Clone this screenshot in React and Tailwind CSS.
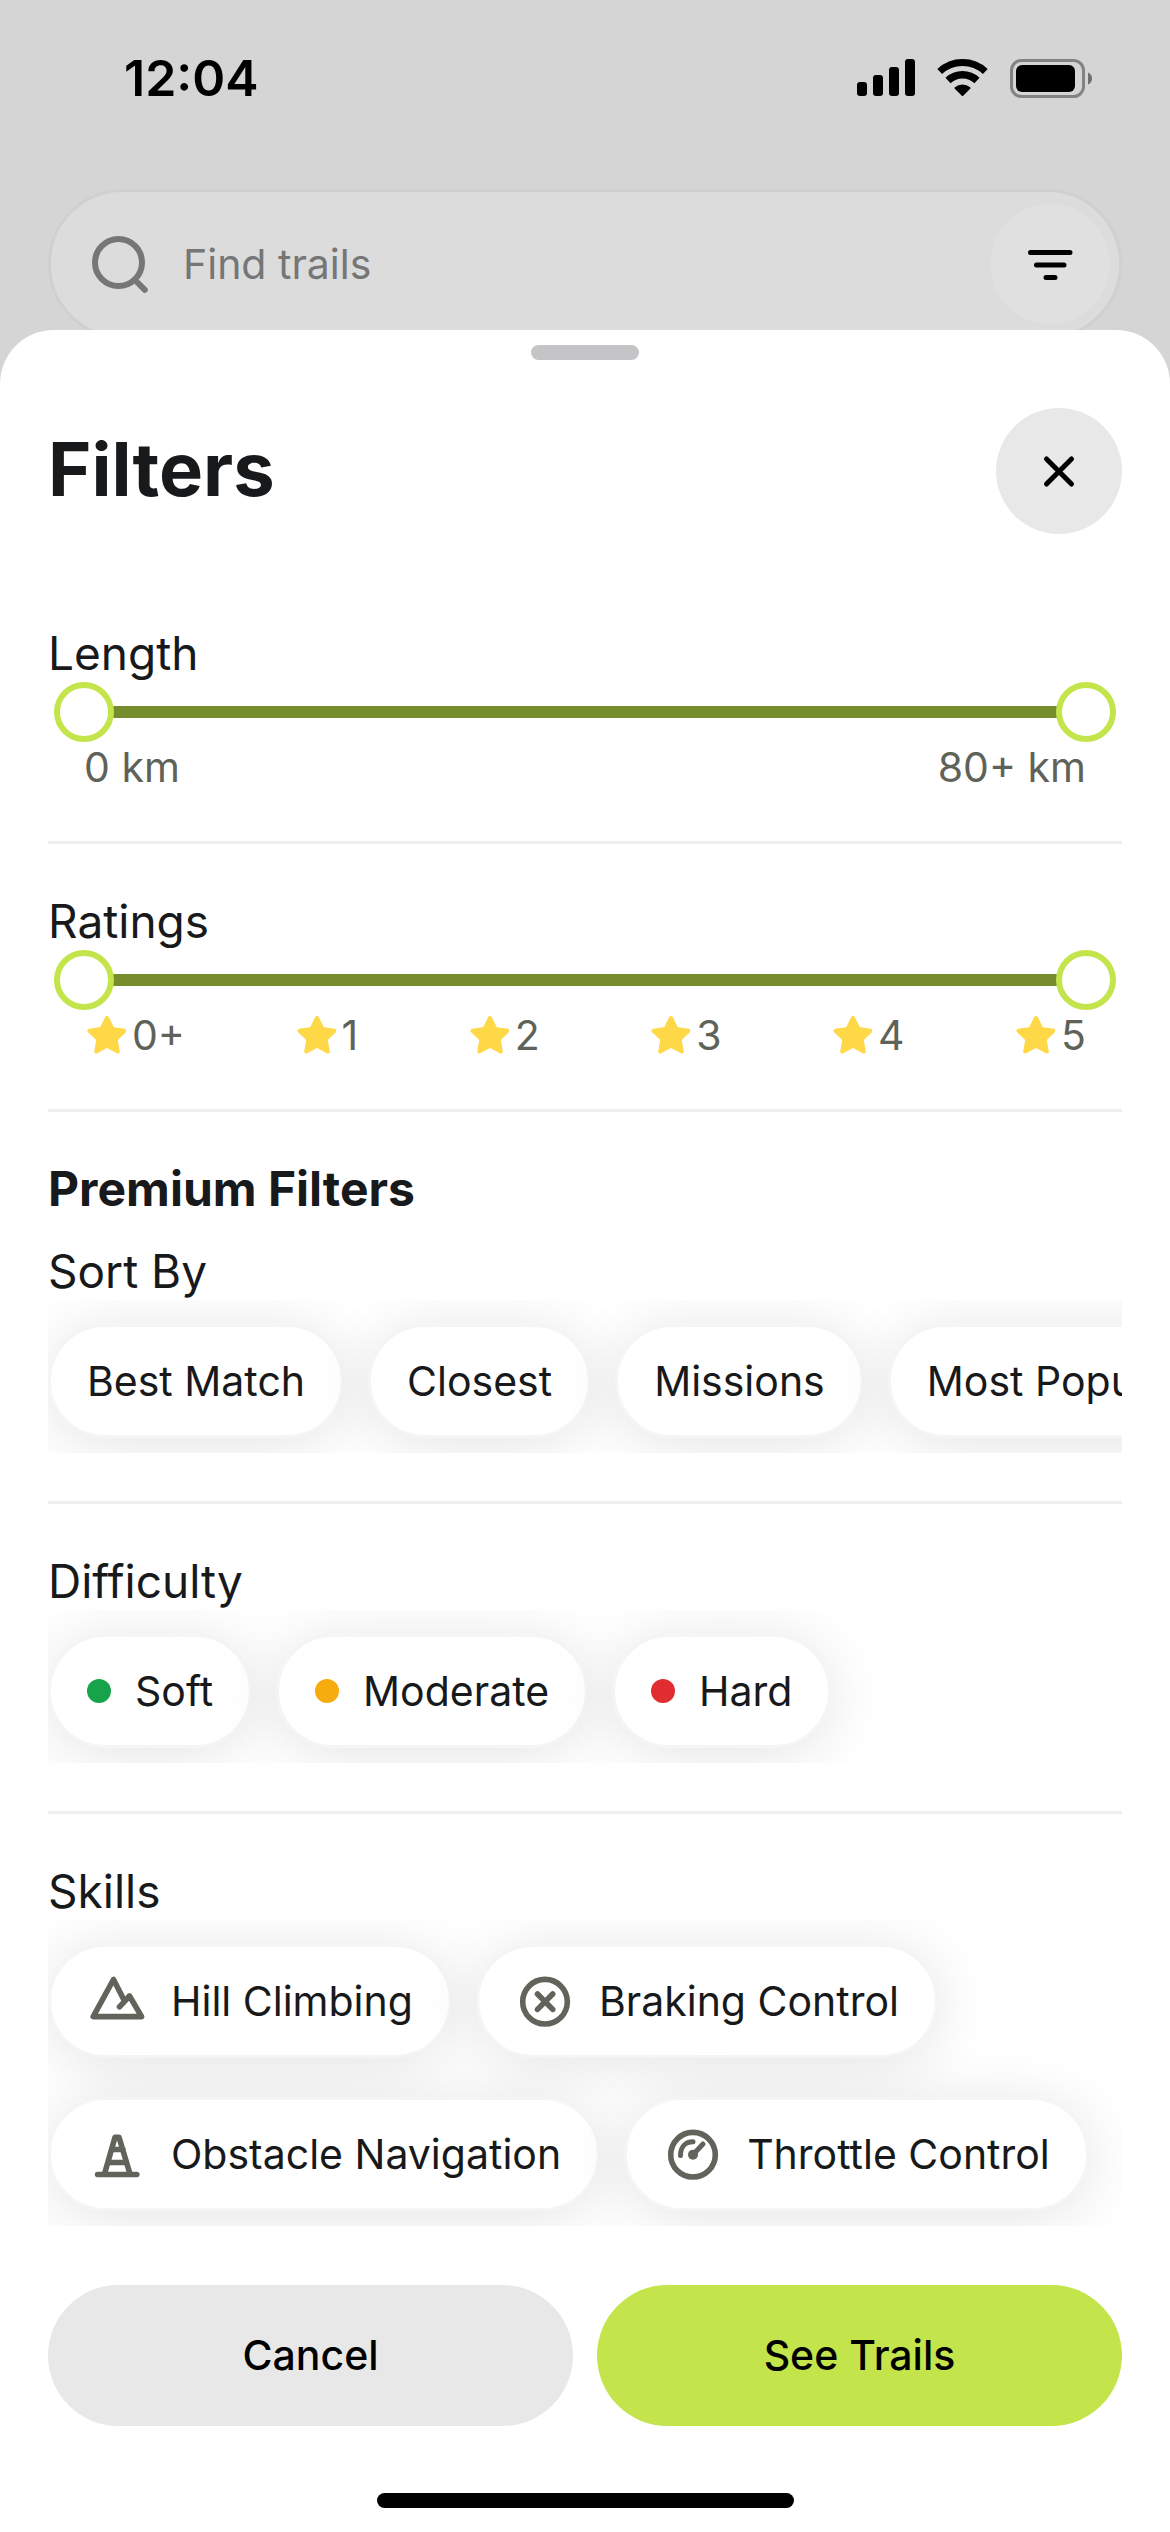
import React, { useState } from "react";

function SignalIcon() {
  return (
    <svg width="58" height="38" viewBox="0 0 58 38" aria-hidden="true">
      <rect x="0" y="23" width="10" height="14" rx="3" />
      <rect x="16" y="16" width="10" height="21" rx="3" />
      <rect x="32" y="8" width="10" height="29" rx="3" />
      <rect x="48" y="0" width="10" height="37" rx="3" />
    </svg>
  );
}

function WifiIcon() {
  return (
    <svg width="51" height="38" viewBox="0 0 51 38" fill="none" stroke="#000" aria-hidden="true">
      <path d="M2.700 12.500a33.500 33.500 0 0 1 45.600 0" strokeWidth="7" />
      <path d="M11 21.400a21.300 21.300 0 0 1 29 0" strokeWidth="7.500" />
      <path d="M18.500 29a10.800 10.800 0 0 1 14 0l-7 7Z" fill="#000" strokeWidth="2" strokeLinejoin="round" />
    </svg>
  );
}

function BatteryIcon() {
  return (
    <svg width="82" height="39" viewBox="0 0 82 39" aria-hidden="true">
      <rect x="1.500" y="1.500" width="72" height="36" rx="10" fill="none" stroke="#838383" strokeWidth="3" />
      <rect x="6" y="6" width="59" height="27" rx="6" />
      <path d="M78 13.500c2.500.8 4 3.200 4 6s-1.500 5.200-4 6Z" fill="#6f6f6f" />
    </svg>
  );
}

function SearchIcon() {
  return (
    <svg width="60" height="60" viewBox="0 0 60 60" fill="none" stroke="#767676" strokeWidth="6" strokeLinecap="round" aria-hidden="true">
      <circle cx="27.500" cy="28.500" r="23.500" />
      <path d="m44.500 46.500 9.300 9.300" />
    </svg>
  );
}

function FilterIcon() {
  return (
    <svg width="48" height="36" viewBox="0 0 48 36" stroke="#000" strokeWidth="5" strokeLinecap="round" aria-hidden="true">
      <path d="M4.500 6.500h39.500M10.500 19h27.500M20 31.500h9" />
    </svg>
  );
}

function CloseIcon() {
  return (
    <svg width="36" height="36" viewBox="0 0 36 36" stroke="#000" strokeWidth="5" strokeLinecap="round" aria-hidden="true">
      <path d="m5.500 6 25 25M30.500 6l-25 25" />
    </svg>
  );
}

function StarIcon() {
  return (
    <svg width="42" height="42" viewBox="0 0 42 42" className="-mt-1" fill="#ffd847" stroke="#ffd847" strokeWidth="4" strokeLinejoin="round" aria-hidden="true">
      <path d="m23 5 5.400 11 12.100 1.800-8.900 8.500 2.200 12.200L23 32.800l-10.800 5.700 2.200-12.200-8.900-8.500L17.600 16Z" />
    </svg>
  );
}

function SkillIcon({ children }) {
  return (
    <svg width="60" height="60" viewBox="0 0 60 60" className="-my-1" fill="none" stroke="#61645b" strokeWidth="5.600" strokeLinecap="round" strokeLinejoin="round" aria-hidden="true">
      {children}
    </svg>
  );
}

const SORTS = ["Best Match", "Closest", "Missions", "Most Popular"];

const DIFFICULTIES = [
  { name: "Soft", dot: "bg-[#17a34a]" },
  { name: "Moderate", dot: "bg-[#f6ac0c]" },
  { name: "Hard", dot: "bg-[#e12d2f]" },
];

const SKILLS = [
  {
    name: "Hill Climbing",
    icon: <path d="m37.500 30-11-21.500L6.200 45.600h48.400L42.500 25 32.500 35.800" />,
  },
  {
    name: "Braking Control",
    icon: (
      <>
        <circle cx="30" cy="30.700" r="22.300" />
        <path d="m22.500 23 15.200 15.400M37.700 23 22.500 38.400" />
      </>
    ),
  },
  {
    name: "Obstacle Navigation",
    icon: <path d="M10.600 50.500h39.200M17.500 50 28 13.200h4L43 50M24.500 25.500h11.500M21 38.500h18.500" />,
  },
  {
    name: "Throttle Control",
    icon: (
      <>
        <circle cx="30" cy="30.700" r="22.300" />
        <circle cx="30" cy="30.700" r="5" fill="#61645b" stroke="none" />
        <path d="M30 30.700 40 20M17.500 31.500c0-8.500 5-13.700 12.500-13.700" strokeWidth="5" />
      </>
    ),
  },
];

function Label({ children }) {
  return <h3 className="text-[46px] leading-[58px] font-normal">{children}</h3>;
}

const THUMB =
  "pointer-events-none absolute inset-0 h-full w-full appearance-none bg-transparent [&::-webkit-slider-thumb]:pointer-events-auto [&::-webkit-slider-thumb]:size-[60px] [&::-webkit-slider-thumb]:appearance-none [&::-webkit-slider-thumb]:rounded-full [&::-webkit-slider-thumb]:border-[6px] [&::-webkit-slider-thumb]:border-solid [&::-webkit-slider-thumb]:border-[#c3e54b] [&::-webkit-slider-thumb]:bg-white";

function RangeSlider({ label, max }) {
  const [low, setLow] = useState(0);
  const [high, setHigh] = useState(max);
  return (
    <div className="relative mx-[6px] flex h-[60px] items-center px-[30px]">
      <div className="h-3 w-full bg-[#778c2c]" />
      <input type="range" min="0" max={max} value={low} aria-label={`Minimum ${label}`} className={THUMB}
        onChange={(e) => setLow(Math.min(Number(e.target.value), high))} />
      <input type="range" min="0" max={max} value={high} aria-label={`Maximum ${label}`} className={THUMB}
        onChange={(e) => setHigh(Math.max(Number(e.target.value), low))} />
    </div>
  );
}

function Pill({ children }) {
  return (
    <button type="button" className="flex shrink-0 items-center gap-6 rounded-full border-[3px] border-[#f5f5f5] bg-white px-9 py-[27px] text-[41px] leading-[54px] whitespace-nowrap shadow-[0_6px_60px_rgba(0,0,0,0.11)]">
      {children}
    </button>
  );
}

function Divider() {
  return <hr className="my-12 border-t-[3px] border-[#eeeeee]" />;
}

export default function App() {
  return (
    <div className="flex min-h-screen flex-col bg-[#d5d5d5] font-[Inter,sans-serif] text-[#18191b]">
      <div className="flex items-center justify-between pt-[47px] pr-[78px] pl-[124px] text-black">
        <span className="text-[50px] leading-[62px] font-semibold">12:04</span>
        <div className="flex items-center gap-[22px]">
          <SignalIcon />
          <WifiIcon />
          <BatteryIcon />
        </div>
      </div>

      <div className="mx-12 mt-20 flex h-[150px] items-center rounded-full border-[3px] border-[#d0d0d2] bg-[#dcdcdc] pr-[9px] pl-10">
        <SearchIcon />
        <input type="search" placeholder="Find trails" aria-label="Find trails"
          className="ml-8 min-w-0 flex-1 bg-transparent text-[41px] leading-[54px] outline-none placeholder:text-[#767676]" />
        <button type="button" aria-label="Open filters" className="flex size-[120px] items-center justify-center rounded-full bg-[#e0e0e0]">
          <FilterIcon />
        </button>
      </div>

      <main className="relative -mt-[9px] flex-1 rounded-t-[54px] bg-white px-12 pt-[15px] pb-6">
        <div className="mx-auto h-[15px] w-[108px] rounded-full bg-[#c5c5c7]" />

        <header className="mt-12 mb-[90px] flex items-center justify-between">
          <h1 className="pb-1 text-[74px] leading-[90px] font-bold">Filters</h1>
          <button type="button" aria-label="Close" className="flex size-[126px] items-center justify-center rounded-full bg-[#e8e8e8]">
            <CloseIcon />
          </button>
        </header>

        <section>
          <Label>Length</Label>
          <RangeSlider label="length" max={80} />
          <div className="flex justify-between px-9 text-[41px] leading-[51px] text-[#5f6259]">
            <span>0 km</span>
            <span>80+ km</span>
          </div>
        </section>
        <Divider />

        <section>
          <Label>Ratings</Label>
          <RangeSlider label="rating" max={5} />
          <div className="flex justify-between px-9 text-[41px] leading-[51px] text-[#5f6259]">
            {["0+", "1", "2", "3", "4", "5"].map((rating) => (
              <span key={rating} className="flex items-center gap-[6px]">
                <StarIcon />
                {rating}
              </span>
            ))}
          </div>
        </section>
        <Divider />

        <h2 className="mb-6 text-[48px] leading-[58px] font-bold">Premium Filters</h2>
        <section>
          <Label>Sort By</Label>
          <div className="flex gap-6 overflow-x-auto pt-6 pb-[15px] [scrollbar-width:none]">
            {SORTS.map((name) => (
              <Pill key={name}>{name}</Pill>
            ))}
          </div>
        </section>
        <Divider />

        <section>
          <Label>Difficulty</Label>
          <div className="flex gap-6 overflow-x-auto pt-6 pb-[15px] [scrollbar-width:none]">
            {DIFFICULTIES.map(({ name, dot }) => (
              <Pill key={name}>
                <span className={`size-6 rounded-full ${dot}`} />
                {name}
              </Pill>
            ))}
          </div>
        </section>
        <Divider />

        <section>
          <Label>Skills</Label>
          <div className="flex flex-wrap gap-x-6 gap-y-[39px] overflow-hidden pt-6 pb-[15px]">
            {SKILLS.map(({ name, icon }) => (
              <Pill key={name}>
                <SkillIcon>{icon}</SkillIcon>
                {name}
              </Pill>
            ))}
          </div>
        </section>

        <div className="mt-[59px] grid grid-cols-2 gap-6 text-[41px] leading-[51px] font-medium text-black">
          <button type="button" className="rounded-full bg-[#e8e8e8] py-[45px]">Cancel</button>
          <button type="button" className="rounded-full bg-[#c3e54b] py-[45px]">See Trails</button>
        </div>

        <div className="mx-auto mt-[67px] h-[15px] w-[417px] rounded-full bg-black" />
      </main>
    </div>
  );
}
